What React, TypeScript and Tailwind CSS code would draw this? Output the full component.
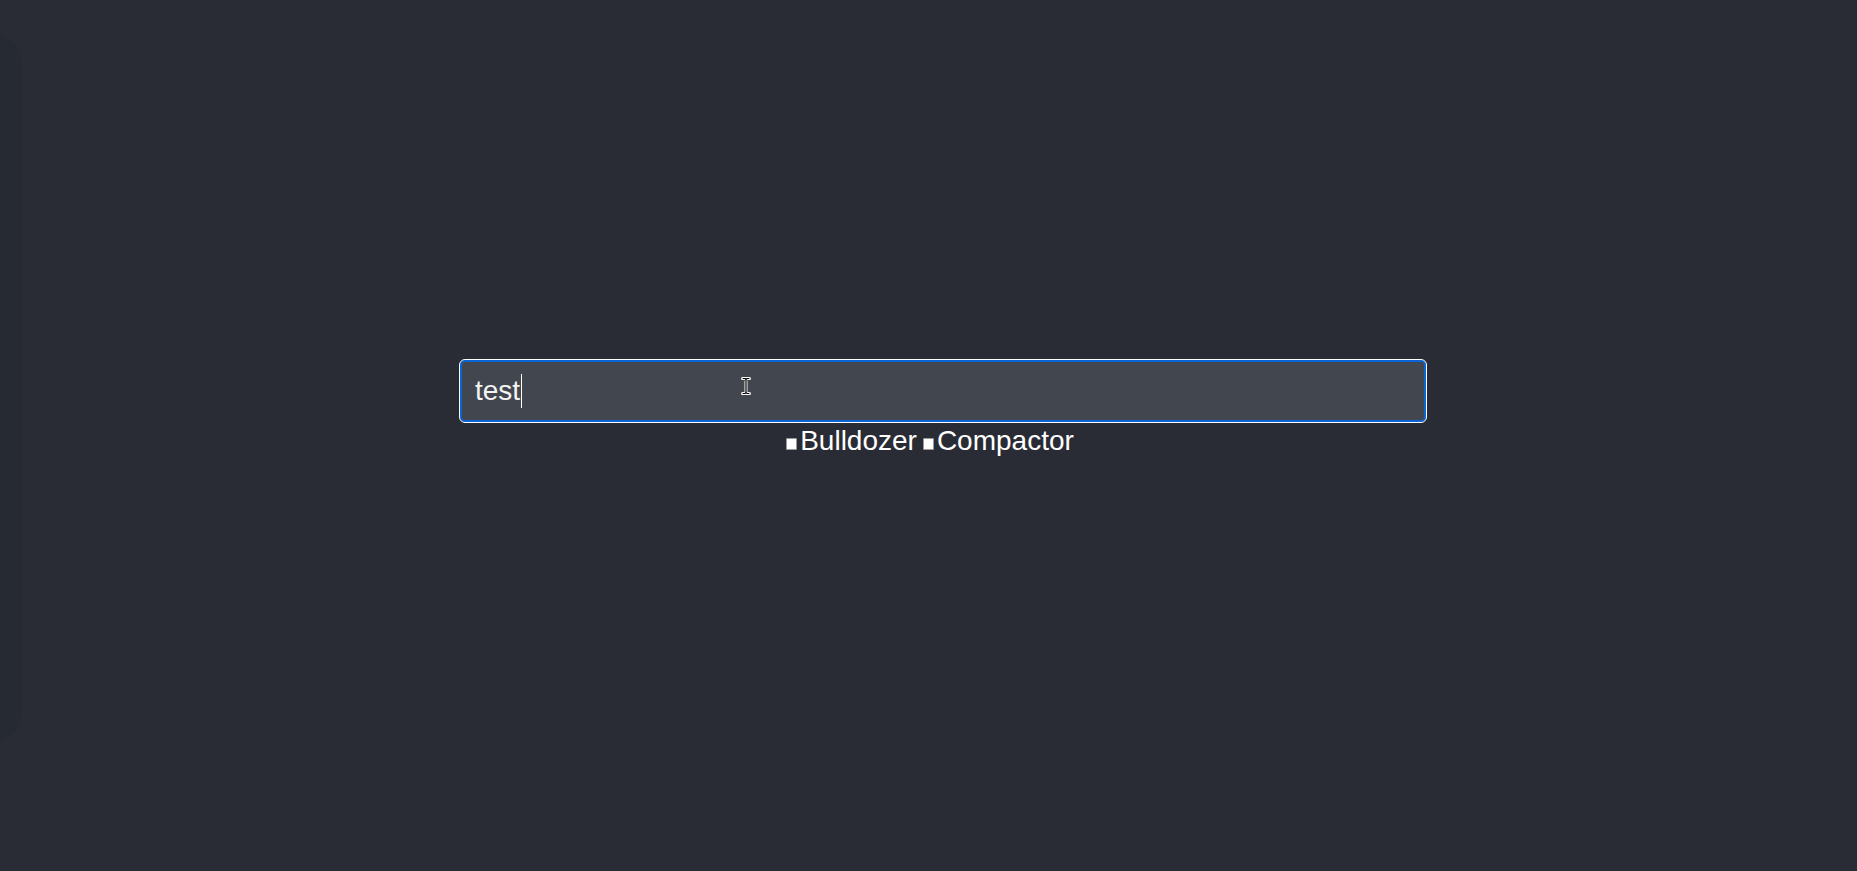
export default function App() {
  return (
    <div className="relative h-[871px] w-full overflow-hidden bg-[#292c35] font-['Liberation_Sans',Arial,sans-serif] text-white">
      {/* drawer mostly off screen */}
      <div className="absolute top-[28px] left-[-300px] h-[720px] w-[322px] rounded-r-[40px] bg-[#262a32]" />

      <div className="flex h-full flex-col items-center pt-[360px]">
        <div className="relative ml-[29px] flex h-[62px] w-[966px] items-center rounded-[5px] border-2 border-[#0a64d6] bg-[#42464e] pl-[13px] outline outline-1 outline-white">
          <span className="text-[28px] leading-[32px] text-[#f4f4f4]">test</span>
          <span className="ml-px h-[34px] w-px bg-white" />
          {/* mouse i-beam */}
          <svg className="absolute left-[279px] top-[15px]" width="10" height="18" viewBox="0 0 10 18">
            <path d="M1.5 1.5h2.5l1 1 1-1h2.5M5 2.5v13M1.5 16.5h2.5l1-1 1 1h2.5" fill="none" stroke="#fff" strokeWidth="3" strokeLinecap="round" />
            <path d="M1.5 1.5h2.5l1 1 1-1h2.5M5 2.5v13M1.5 16.5h2.5l1-1 1 1h2.5" fill="none" stroke="#000" strokeWidth="1.2" />
          </svg>
        </div>

        <div className="mt-[3px] ml-[3px] flex items-baseline text-[28px] leading-[32px]">
          <span className="mr-[3px] inline-block h-[12px] w-[11px] rounded-[1px] border border-[#9a9a9a] bg-white" />
          <span>Bulldozer</span>
          <span className="ml-[6px] mr-[3px] inline-block h-[12px] w-[11px] rounded-[1px] border border-[#9a9a9a] bg-white" />
          <span>Compactor</span>
        </div>
      </div>
    </div>
  );
}
